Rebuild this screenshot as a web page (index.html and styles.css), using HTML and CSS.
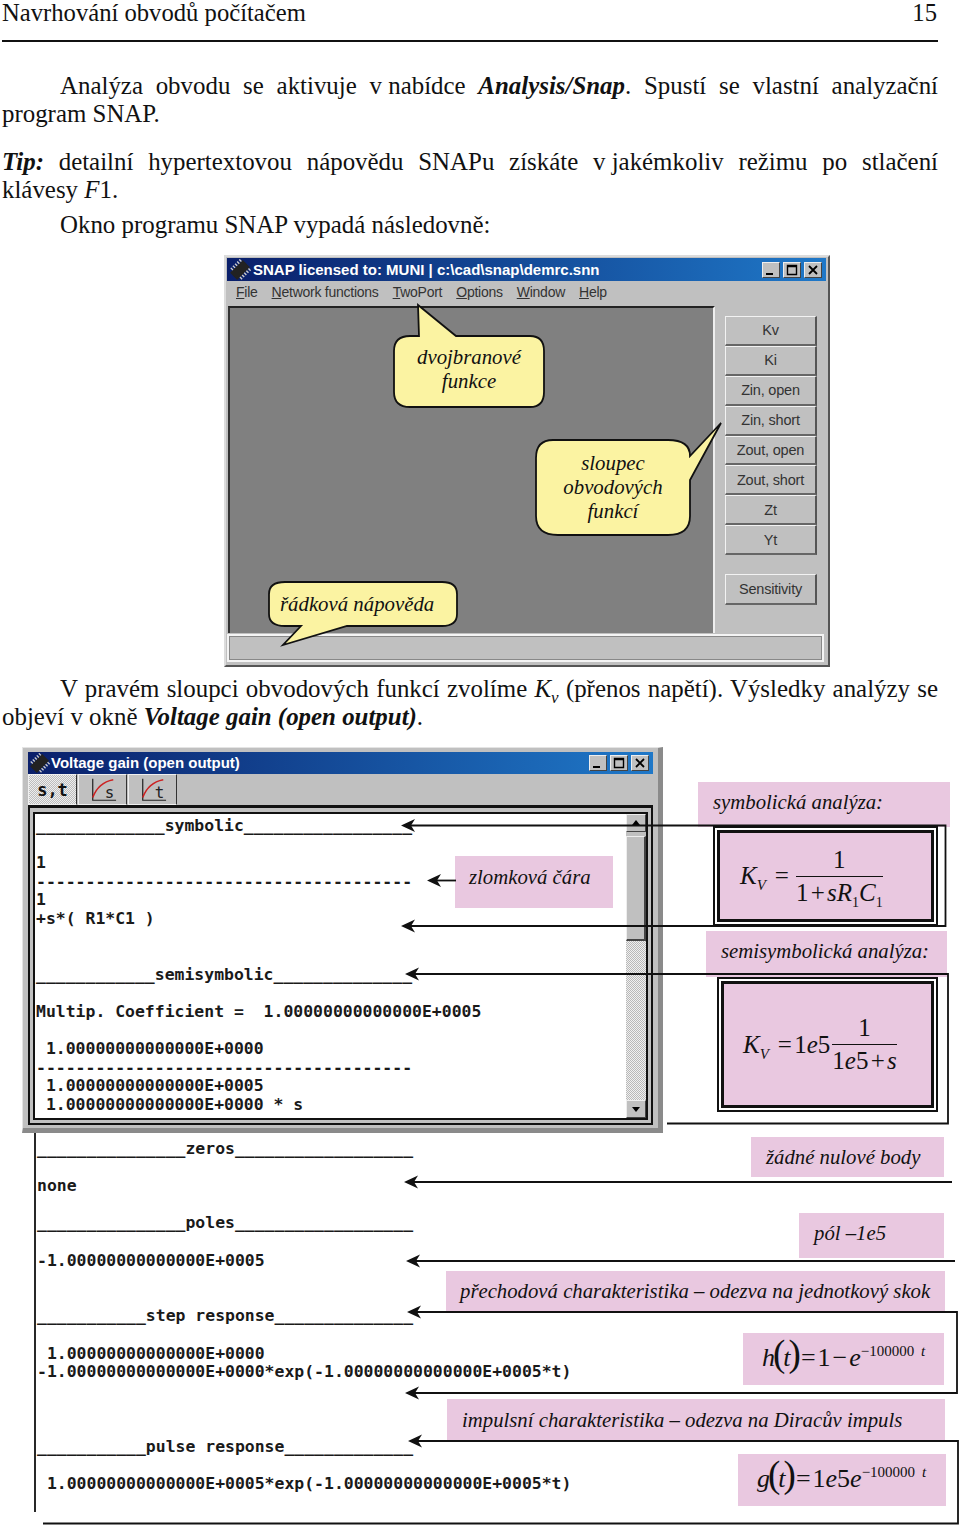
FILE: index.html
```html
<!DOCTYPE html>
<html lang="cs">
<head>
  <meta charset="UTF-8">
  <title>Navrhování obvodů počítačem</title>
  <link rel="stylesheet" href="styles.css">
</head>
<body>
  <header class="running-head">
    <span>Navrhování obvodů počítačem</span>
    <span class="page-no">15</span>
  </header>

  <p class="para first">
    <span class="line indent">Analýza obvodu se aktivuje <span class="tight">v nabídce</span> <b><i>Analysis/Snap</i></b>. Spustí se vlastní analyzační</span>
    <span class="line-end">program SNAP.</span>
  </p>
  <p class="para tip">
    <span class="line"><b><i>Tip:</i></b> detailní hypertextovou nápovědu SNAPu získáte <span class="tight">v jakémkoliv</span> režimu po stlačení</span>
    <span class="line-end">klávesy <i>F</i>1.</span>
  </p>
  <p class="para next"><span class="line-end indent">Okno programu SNAP vypadá následovně:</span></p>

  <!-- okno SNAP -->
  <div class="snap-figure">
    <div class="snap-win">
      <div class="titlebar snap-title">
        <svg class="chip" viewBox="0 0 22 22"><g transform="rotate(45 11 11)"><rect x="6" y="2" width="10" height="18" fill="#222"/><path d="M3 4h3M3 7h3M3 10h3M3 13h3M3 16h3M16 4h3M16 7h3M16 10h3M16 13h3M16 16h3" stroke="#ccc" stroke-width="1.4"/></g></svg>
        <span class="title-text">SNAP licensed to: MUNI | c:\cad\snap\demrc.snn</span>
        <div class="win-btns">
          <span class="win-btn"><svg viewBox="0 0 16 14"><path d="M3 11h7" stroke="#000" stroke-width="2"/></svg></span>
          <span class="win-btn"><svg viewBox="0 0 16 14"><path d="M3.500 2.500h9v9h-9zM3 3.500h10" fill="none" stroke="#000" stroke-width="1.400"/></svg></span>
          <span class="win-btn close"><svg viewBox="0 0 16 14"><path d="M4 3l8 8M12 3l-8 8" stroke="#000" stroke-width="1.800"/></svg></span>
        </div>
      </div>
      <div class="menu">
        <span><u>F</u>ile</span>
        <span><u>N</u>etwork functions</span>
        <span><u>T</u>woPort</span>
        <span><u>O</u>ptions</span>
        <span><u>W</u>indow</span>
        <span><u>H</u>elp</span>
      </div>
      <div class="snap-main">
        <div class="workspace"></div>
        <div class="func-col">
          <div class="func-btn">Kv</div>
          <div class="func-btn">Ki</div>
          <div class="func-btn">Zin, open</div>
          <div class="func-btn">Zin, short</div>
          <div class="func-btn">Zout, open</div>
          <div class="func-btn">Zout, short</div>
          <div class="func-btn">Zt</div>
          <div class="func-btn">Yt</div>
          <div class="func-btn sens">Sensitivity</div>
        </div>
      </div>
      <div class="statusbar"></div>
    </div>

    <svg class="overlay" viewBox="224 255 606 412">
      <path class="bubble" d="M418 305 L456 336 H530 Q544 336 544 351 V392 Q544 407 530 407 H410 Q394 407 394 392 V351 Q394 336 410 336 H419 Z"/>
      <path class="bubble" d="M553 440 H668 Q690 440 690 456 L721 423 L690 480 V516 Q690 535 668 535 H558 Q536 535 536 516 V458 Q536 440 553 440 Z"/>
      <path class="bubble" d="M285 582 H442 Q457 582 457 594 V614 Q457 626 442 626 H347 L283 645 L301 626 H285 Q269 626 269 614 V594 Q269 582 285 582 Z"/>
    </svg>
    <div class="bubble-text b-two">dvojbranové<br>funkce</div>
    <div class="bubble-text b-col">sloupec<br>obvodových<br>funkcí</div>
    <div class="bubble-text b-row">řádková nápověda</div>
  </div>

  <p class="para after-fig">
    <span class="line indent">V pravém sloupci obvodových funkcí zvolíme <i>K<sub class="vsub">v</sub></i> (přenos napětí). Výsledky analýzy se</span>
    <span class="line-end">objeví v okně <b><i>Voltage gain (open output)</i></b>.</span>
  </p>

  <!-- okno Voltage gain s popisky -->
  <div class="gain-figure">
    <div class="gain-win">
      <div class="titlebar gain-title">
        <svg class="chip small" viewBox="0 0 22 22"><g transform="rotate(45 11 11)"><rect x="6" y="2" width="10" height="18" fill="#222"/><path d="M3 4h3M3 7h3M3 10h3M3 13h3M3 16h3M16 4h3M16 7h3M16 10h3M16 13h3M16 16h3" stroke="#ccc" stroke-width="1.4"/></g></svg>
        <span class="title-text">Voltage gain (open output)</span>
        <div class="win-btns">
          <span class="win-btn"><svg viewBox="0 0 16 14"><path d="M3 11h7" stroke="#000" stroke-width="2"/></svg></span>
          <span class="win-btn"><svg viewBox="0 0 16 14"><path d="M3.500 2.500h9v9h-9zM3 3.500h10" fill="none" stroke="#000" stroke-width="1.400"/></svg></span>
          <span class="win-btn close"><svg viewBox="0 0 16 14"><path d="M4 3l8 8M12 3l-8 8" stroke="#000" stroke-width="1.800"/></svg></span>
        </div>
      </div>
      <div class="toolbar">
        <div class="tool pressed">s,t</div>
        <div class="tool">
          <svg viewBox="0 0 48 30"><path d="M13 3V26H38" fill="none" stroke="#222" stroke-width="1.300"/><path d="M13 23Q19 7 35 4" fill="none" stroke="#c22" stroke-width="1.600"/><text x="26" y="24" class="tool-letter">s</text></svg>
        </div>
        <div class="tool">
          <svg viewBox="0 0 48 30"><path d="M13 3V26H38" fill="none" stroke="#222" stroke-width="1.300"/><path d="M13 23Q19 7 35 4" fill="none" stroke="#c22" stroke-width="1.600"/><text x="26" y="24" class="tool-letter">t</text></svg>
        </div>
      </div>
      <div class="frame">
        <div class="frame-inner">
          <div class="mono out-top">
            <div class="row">_____________symbolic_________________</div>
            <div class="row blank"></div>
            <div class="row">1</div>
            <div class="row">--------------------------------------</div>
            <div class="row">1</div>
            <div class="row">+s*( R1*C1 )</div>
            <div class="row blank"></div>
            <div class="row blank"></div>
            <div class="row">____________semisymbolic______________</div>
            <div class="row blank"></div>
            <div class="row">Multip. Coefficient =  1.00000000000000E+0005</div>
            <div class="row blank"></div>
            <div class="row"> 1.00000000000000E+0000</div>
            <div class="row">--------------------------------------</div>
            <div class="row"> 1.00000000000000E+0005</div>
            <div class="row"> 1.00000000000000E+0000 * s</div>
          </div>
          <div class="scrollbar">
            <div class="sb-btn"><svg viewBox="0 0 16 16"><path d="M8 5l4 5H4z"/></svg></div>
            <div class="sb-thumb"></div>
            <div class="sb-track"></div>
            <div class="sb-btn"><svg viewBox="0 0 16 16"><path d="M8 11l4-5H4z"/></svg></div>
          </div>
        </div>
      </div>
    </div>

    <div class="mono out-bottom">
      <div class="row">_______________zeros__________________</div>
      <div class="row blank"></div>
      <div class="row">none</div>
      <div class="row blank"></div>
      <div class="row">_______________poles__________________</div>
      <div class="row blank"></div>
      <div class="row">-1.00000000000000E+0005</div>
      <div class="row blank"></div>
      <div class="row blank"></div>
      <div class="row">___________step response______________</div>
      <div class="row blank"></div>
      <div class="row"> 1.00000000000000E+0000</div>
      <div class="row">-1.00000000000000E+0000*exp(-1.00000000000000E+0005*t)</div>
      <div class="row blank"></div>
      <div class="row blank"></div>
      <div class="row blank"></div>
      <div class="row">___________pulse response_____________</div>
      <div class="row blank"></div>
      <div class="row"> 1.00000000000000E+0005*exp(-1.00000000000000E+0005*t)</div>
    </div>

    <div class="note n-frac">zlomková čára</div>
    <div class="note n-sym">symbolická analýza:</div>
    <div class="note n-semi">semisymbolická analýza:</div>
    <div class="note n-zero">žádné nulové body</div>
    <div class="note n-pole">pól –1e5</div>
    <div class="note n-step">přechodová charakteristika – odezva na jednotkový skok</div>
    <div class="note n-imp">impulsní charakteristika – odezva na Diracův impuls</div>

    <div class="eq-box eq-one">
      <div class="eq-in">
        <span class="eq-k"><i>K</i><sub><i>V</i></sub></span>
        <span class="eq-eq">=</span>
        <span class="frac"><span class="num">1</span><span class="den">1 + <i>sR</i><sub>1</sub><i>C</i><sub>1</sub></span></span>
      </div>
    </div>
    <div class="eq-box eq-two">
      <div class="eq-in">
        <span class="eq-k"><i>K</i><sub><i>V</i></sub></span>
        <span class="eq-eq near">= 1<i>e</i>5</span>
        <span class="frac"><span class="num">1</span><span class="den">1<i>e</i>5 + <i>s</i></span></span>
      </div>
    </div>
    <div class="note eq-line n-h"><i>h</i><span class="paren">(</span><i>t</i><span class="paren">)</span> = 1 − <i>e</i><sup>−100000 <i>t</i></sup></div>
    <div class="note eq-line n-g"><i>g</i><span class="paren">(</span><i>t</i><span class="paren">)</span> = 1<i>e</i>5<i>e</i><sup>−100000 <i>t</i></sup></div>

    <svg class="overlay" viewBox="0 747 960 780">
      <defs>
        <path id="head" d="M0 0L14 -6.500L10 0L14 6.500Z"/>
      </defs>
      <path class="lead" d="M405 825.500H945.500V926H405"/>
      <path class="lead" d="M410 974H948V1123.500H667"/>
      <path class="lead" d="M432 880.500H456"/>
      <path class="lead" d="M409 1182H952"/>
      <path class="lead" d="M411 1261H955"/>
      <path class="lead" d="M412 1312H957V1393H410"/>
      <path class="lead" d="M413 1441H958V1523.500H43"/>
      <path class="lead" d="M35 1133V1512"/>
      <use href="#head" x="401" y="825.500"/>
      <use href="#head" x="401" y="926"/>
      <use href="#head" x="405" y="974"/>
      <use href="#head" x="427" y="880.500"/>
      <use href="#head" x="404" y="1182"/>
      <use href="#head" x="406" y="1261"/>
      <use href="#head" x="407" y="1312"/>
      <use href="#head" x="405" y="1393"/>
      <use href="#head" x="408" y="1441"/>
    </svg>
  </div>
</body>
</html>
```

FILE: styles.css
```css
body {
  margin: 0;
  background: white;
  color: #111;
  font-family: "Liberation Serif", serif;
  font-size: 24.900px;
  line-height: 28px;
  width: 960px;
  height: 1527px;
  overflow: hidden;
}

.running-head {
  display: flex;
  justify-content: space-between;
  width: 936px;
  height: 40px;
  margin-left: 2px;
  border-bottom: 2px solid #111;
  font-size: 24.650px;
  line-height: 26px;
}

.page-no {
  padding-right: 1px;
}

.para {
  margin: 0 22px 0 2px;
}

.para.first {
  margin-top: 30px;
}

.para.tip {
  margin-top: 20px;
}

.para.next {
  margin-top: 7px;
}

.para.after-fig {
  margin-top: 8px;
}

.line {
  display: block;
  text-align: justify;
  text-align-last: justify;
}

.line-end {
  display: block;
}

.indent {
  padding-left: 58px;
}

.tight {
  display: inline-block;
  text-align-last: left;
}

.vsub {
  font-size: 17px;
  line-height: 0;
}

/* okno SNAP */
.snap-figure {
  position: relative;
  width: 606px;
  height: 412px;
  margin: 16px 0 0 224px;
}

.snap-win {
  box-sizing: border-box;
  width: 606px;
  height: 412px;
  padding: 1px 2px 0 1px;
  background: #c0c0c0;
  border: 2px solid #dcdcdc;
  border-right-color: #555;
  border-bottom-color: #555;
  display: flex;
  flex-direction: column;
}

.titlebar {
  display: flex;
  align-items: center;
  background: linear-gradient(90deg, #0a1f6a, #1f78c8);
  color: white;
  font-family: "Liberation Sans", sans-serif;
  font-weight: bold;
  font-size: 15px;
}

.snap-title {
  height: 23px;
}

.chip {
  width: 26px;
  height: 22px;
  flex: none;
}

.chip.small {
  width: 23px;
  height: 21px;
}

.title-text {
  white-space: nowrap;
}

.win-btns {
  margin-left: auto;
  display: flex;
  gap: 3px;
  padding-right: 4px;
}

.win-btn {
  box-sizing: border-box;
  width: 18px;
  height: 16px;
  background: #c0c0c0;
  border: 1px solid #eee;
  border-right-color: #444;
  border-bottom-color: #444;
  display: flex;
}

.win-btn svg {
  width: 100%;
  height: 100%;
}

.menu {
  display: flex;
  gap: 14px;
  box-sizing: border-box;
  height: 25px;
  padding: 0 0 3px 9px;
  align-items: center;
  font-family: "Liberation Sans", sans-serif;
  font-size: 14px;
  letter-spacing: -0.25px;
  color: #333;
}

.snap-main {
  display: flex;
  height: 327px;
}

.workspace {
  box-sizing: border-box;
  width: 487px;
  margin-left: 1px;
  background: #808080;
  border-top: 2px solid #222;
  border-left: 2px solid #333;
  border-right: 2px solid #eee;
}

.func-col {
  width: 92px;
  margin-left: 10px;
  padding-top: 10px;
  display: flex;
  flex-direction: column;
}

.func-btn {
  box-sizing: border-box;
  height: 29.900px;
  display: flex;
  align-items: center;
  justify-content: center;
  background: #c0c0c0;
  border: 1px solid #f2f2f2;
  border-right: 2px solid #555;
  border-bottom: 2px solid #666;
  font-family: "Liberation Sans", sans-serif;
  font-size: 14.500px;
  letter-spacing: -0.2px;
  color: #333;
}

.func-btn.sens {
  height: 31px;
  margin-top: 19px;
}

.statusbar {
  box-sizing: border-box;
  height: 28px;
  margin: 1px 2px 0 0;
  background: #c0c0c0;
  border: 2px solid #f4f4f4;
  outline: 1px solid #888;
  outline-offset: -3px;
}

.overlay {
  position: absolute;
  top: 0;
  left: 0;
  width: 100%;
  height: 100%;
}

.bubble {
  fill: #fbf3a2;
  stroke: #111;
  stroke-width: 1.800;
}

.bubble-text {
  position: absolute;
  font-style: italic;
  font-size: 20.800px;
  line-height: 24px;
  text-align: center;
  white-space: nowrap;
}

.b-two {
  left: 170px;
  top: 90px;
  width: 150px;
}

.b-col {
  left: 314px;
  top: 196px;
  width: 150px;
}

.b-row {
  left: 56px;
  top: 337px;
}

/* okno Voltage gain */
.gain-figure {
  position: relative;
  width: 960px;
  height: 780px;
  margin-top: 16px;
}

.gain-win {
  box-sizing: border-box;
  width: 641px;
  height: 386px;
  margin-left: 22px;
  padding: 4px 5px 3px 5px;
  background: #c0c0c0;
  border: 1px solid #e4e4e4;
  border-right: 5px solid #8a8a8a;
  border-bottom: 5px solid #8a8a8a;
}

.gain-title {
  height: 22px;
}

.toolbar {
  display: flex;
  height: 31px;
  gap: 1px;
}

.tool {
  box-sizing: border-box;
  width: 49px;
  border: 1px solid #efefef;
  border-right: 1px solid #333;
  display: flex;
  align-items: center;
  justify-content: center;
}

.tool svg {
  width: 46px;
  height: 28px;
}

.tool.pressed {
  background-image: repeating-conic-gradient(#bdbdbd 0 25%, #eee 0 50%);
  background-size: 2px 2px;
  font-family: "DejaVu Sans Mono", monospace;
  font-weight: bold;
  font-size: 17px;
}

.tool-letter {
  font-family: "DejaVu Sans Mono", monospace;
  font-size: 17px;
  fill: #222;
}

.frame {
  box-sizing: border-box;
  height: 320px;
  padding: 4px 3px 3px 3px;
  border: 2px solid #111;
  border-top-width: 3px;
}

.frame-inner {
  box-sizing: border-box;
  height: 100%;
  display: flex;
  border: 2px solid #111;
  background: white;
}

.mono {
  font-family: "DejaVu Sans Mono", monospace;
  font-weight: bold;
  font-size: 16.450px;
  line-height: 18.600px;
  color: #1a1a1a;
}

.row {
  width: fit-content;
  height: 18.600px;
  white-space: pre;
}

.row.blank {
  width: auto;
}

.out-top {
  flex: 1;
  padding: 3px 0 0 1px;
  overflow: hidden;
}

.out-bottom {
  width: fit-content;
  margin: 7px 0 0 37px;
}

.scrollbar {
  width: 20px;
  flex: none;
  display: flex;
  flex-direction: column;
  background: #c0c0c0;
}

.sb-btn {
  box-sizing: border-box;
  height: 18px;
  flex: none;
  background: #c0c0c0;
  border: 1px solid #eee;
  border-right-color: #444;
  border-bottom-color: #444;
}

.sb-btn svg {
  display: block;
  width: 100%;
  height: 100%;
}

.sb-thumb {
  box-sizing: border-box;
  height: 105px;
  flex: none;
  margin-top: 4px;
  background: #c0c0c0;
  border: 1px solid #eee;
  border-right: 2px solid #444;
  border-bottom: 2px solid #444;
}

.sb-track {
  flex: 1;
  background-image: repeating-conic-gradient(#b8b8b8 0 25%, #f0f0f0 0 50%);
  background-size: 2px 2px;
}

/* růžové popisky */
.note {
  position: absolute;
  box-sizing: border-box;
  display: flex;
  align-items: center;
  background: #e9c8e0;
  font-style: italic;
  font-size: 20.750px;
  white-space: nowrap;
}

.n-frac {
  left: 455px;
  top: 109px;
  width: 158px;
  height: 52px;
  padding: 0 0 10px 14px;
}

.n-sym {
  left: 698px;
  top: 35px;
  width: 252px;
  height: 45px;
  padding: 0 0 5px 15px;
}

.n-semi {
  left: 706px;
  top: 184px;
  width: 241px;
  height: 46px;
  padding: 0 0 6px 15px;
}

.n-zero {
  left: 751px;
  top: 390px;
  width: 193px;
  height: 40px;
  padding-left: 15px;
}

.n-pole {
  left: 799px;
  top: 466px;
  width: 145px;
  height: 45px;
  padding: 0 0 6px 15px;
}

.n-step {
  left: 446px;
  top: 524px;
  width: 499px;
  height: 40px;
  padding-left: 14px;
}

.n-imp {
  left: 447px;
  top: 652px;
  width: 498px;
  height: 42px;
  padding-left: 15px;
}

/* vzorce */
.eq-box {
  position: absolute;
  box-sizing: border-box;
  padding: 2px;
  background: white;
  border: 2px solid #111;
}

.eq-in {
  box-sizing: border-box;
  height: 100%;
  display: flex;
  align-items: center;
  background: #e9c8e0;
  border: 3px solid #111;
  font-size: 25px;
}

.eq-one {
  left: 713px;
  top: 79px;
  width: 225px;
  height: 100px;
}

.eq-one .eq-in {
  padding-left: 20px;
}

.eq-two {
  left: 717px;
  top: 230px;
  width: 221px;
  height: 135px;
}

.eq-two .eq-in {
  padding-left: 19px;
}

.eq-k sub {
  font-size: 15px;
  line-height: 0;
}

.eq-eq {
  margin: 0 7px 0 9px;
}

.eq-eq.near {
  margin: 0 2px 0 9px;
  word-spacing: -4px;
}

.frac {
  display: flex;
  flex-direction: column;
  align-items: center;
  line-height: 26px;
}

.num {
  display: block;
  width: 100%;
  text-align: center;
  padding-bottom: 3px;
  border-bottom: 1.500px solid #111;
}

.den {
  padding: 3px 0 0;
  white-space: nowrap;
  word-spacing: -4px;
}

.den sub {
  font-size: 14px;
  line-height: 0;
}

.eq-line {
  font-size: 26px;
  font-style: normal;
  word-spacing: -4.500px;
}

.paren {
  font-size: 37px;
  line-height: 30px;
  margin: 0 -2px;
}

.eq-line sup {
  font-size: 15px;
  line-height: 0;
  vertical-align: 10px;
  word-spacing: 3px;
}

.n-h {
  left: 743px;
  top: 586px;
  width: 201px;
  height: 52px;
  padding-left: 19px;
  display: block;
  line-height: 50px;
}

.n-g {
  left: 738px;
  top: 707px;
  width: 208px;
  height: 52px;
  padding-left: 19px;
  display: block;
  line-height: 50px;
}

/* šipky */
.lead {
  fill: none;
  stroke: #111;
  stroke-width: 1.800;
}

.gain-figure use {
  fill: #111;
}
```
